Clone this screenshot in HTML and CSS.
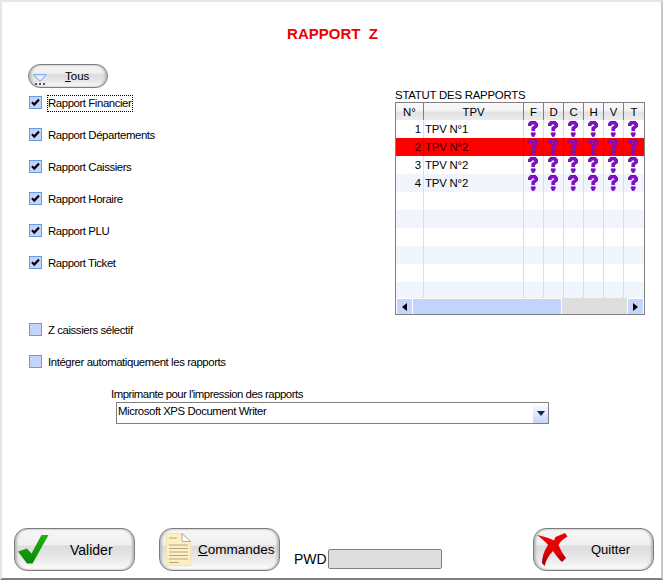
FILE: index.html
```html
<!DOCTYPE html>
<html lang="fr">
<head>
<meta charset="utf-8">
<title>Rapport Z</title>
<link rel="stylesheet" href="styles.css">
</head>
<body>
<svg class="defs" width="0" height="0">
  <symbol id="qm" viewBox="0 0 10 16">
    <path d="M1.8 5V3.2L3.2 1.8H6.8L8.2 3.2V5L5.2 7.4V10" fill="none" stroke="#5c16a8" stroke-width="3.5"/>
    <path d="M1.8 5V3.2L3.2 1.8H6.8L8.2 3.2V5L5.2 7.4V10" fill="none" stroke="#8c0ccc" stroke-width="2.2"/>
    <path d="M3.2 11.8H7.2V13.4L5.9 15.8H4.5L3.2 13.4Z" fill="#860ec8" stroke="#5c16a8" stroke-width=".7"/>
  </symbol>
  <symbol id="chk" viewBox="0 0 13 13">
    <path d="M3 6.2L5.3 8.6L10 3.6" fill="none" stroke="#000" stroke-width="2.2"/>
  </symbol>
  <linearGradient id="gGreen" x1="0" y1="0" x2="0" y2="1">
    <stop offset="0" stop-color="#22b012"/><stop offset="1" stop-color="#0a8806"/>
  </linearGradient>
  <linearGradient id="gRed" x1="0" y1="0" x2="0" y2="1">
    <stop offset="0" stop-color="#f00008"/><stop offset=".6" stop-color="#e00008"/><stop offset="1" stop-color="#8a0004"/>
  </linearGradient>
</svg>
<div class="window">
  <h1 class="title">RAPPORT&nbsp; Z</h1>

  <button class="pill">
    <svg class="pill-icon" width="14" height="11" viewBox="0 0 14 11">
      <path d="M.7.7H13.3L7 7.4Z" fill="#eaf2ff" stroke="#6ea4f4"/>
      <path d="M2 10h2M6 10h2M10 10h2" stroke="#222" stroke-width="1.4"/>
    </svg>
    <span><u>T</u>ous</span>
  </button>

  <div class="main">
    <div class="options">
      <div class="opt"><span class="box"><svg width="13" height="13"><use href="#chk"/></svg></span><span class="lbl focus">Rapport Financier</span></div>
      <div class="opt"><span class="box"><svg width="13" height="13"><use href="#chk"/></svg></span><span class="lbl">Rapport Départements</span></div>
      <div class="opt"><span class="box"><svg width="13" height="13"><use href="#chk"/></svg></span><span class="lbl">Rapport Caissiers</span></div>
      <div class="opt"><span class="box"><svg width="13" height="13"><use href="#chk"/></svg></span><span class="lbl">Rapport Horaire</span></div>
      <div class="opt"><span class="box"><svg width="13" height="13"><use href="#chk"/></svg></span><span class="lbl">Rapport PLU</span></div>
      <div class="opt"><span class="box"><svg width="13" height="13"><use href="#chk"/></svg></span><span class="lbl">Rapport Ticket</span></div>
      <div class="opt sep"><span class="box"></span><span class="lbl">Z caissiers sélectif</span></div>
      <div class="opt"><span class="box"></span><span class="lbl">Intégrer automatiquement les rapports</span></div>
    </div>

    <div class="status">
      <div class="status-title">STATUT DES RAPPORTS</div>
      <div class="grid">
        <div class="grid-view">
          <table>
            <colgroup><col class="c-n"><col class="c-t"><col class="c-s"><col class="c-s"><col class="c-s"><col class="c-s"><col class="c-s"><col class="c-s"></colgroup>
            <thead><tr><th>N°</th><th>TPV</th><th>F</th><th>D</th><th>C</th><th>H</th><th>V</th><th>T</th></tr></thead>
            <tbody>
              <tr><td class="num">1</td><td>TPV N°1</td><td><svg class="q"><use href="#qm"/></svg></td><td><svg class="q"><use href="#qm"/></svg></td><td><svg class="q"><use href="#qm"/></svg></td><td><svg class="q"><use href="#qm"/></svg></td><td><svg class="q"><use href="#qm"/></svg></td><td><svg class="q"><use href="#qm"/></svg></td></tr>
              <tr class="sel"><td class="num">2</td><td>TPV N°2</td><td><svg class="q"><use href="#qm"/></svg></td><td><svg class="q"><use href="#qm"/></svg></td><td><svg class="q"><use href="#qm"/></svg></td><td><svg class="q"><use href="#qm"/></svg></td><td><svg class="q"><use href="#qm"/></svg></td><td><svg class="q"><use href="#qm"/></svg></td></tr>
              <tr><td class="num">3</td><td>TPV N°2</td><td><svg class="q"><use href="#qm"/></svg></td><td><svg class="q"><use href="#qm"/></svg></td><td><svg class="q"><use href="#qm"/></svg></td><td><svg class="q"><use href="#qm"/></svg></td><td><svg class="q"><use href="#qm"/></svg></td><td><svg class="q"><use href="#qm"/></svg></td></tr>
              <tr class="alt"><td class="num">4</td><td>TPV N°2</td><td><svg class="q"><use href="#qm"/></svg></td><td><svg class="q"><use href="#qm"/></svg></td><td><svg class="q"><use href="#qm"/></svg></td><td><svg class="q"><use href="#qm"/></svg></td><td><svg class="q"><use href="#qm"/></svg></td><td><svg class="q"><use href="#qm"/></svg></td></tr>
              <tr><td></td><td></td><td></td><td></td><td></td><td></td><td></td><td></td></tr>
              <tr class="alt"><td></td><td></td><td></td><td></td><td></td><td></td><td></td><td></td></tr>
              <tr><td></td><td></td><td></td><td></td><td></td><td></td><td></td><td></td></tr>
              <tr class="alt"><td></td><td></td><td></td><td></td><td></td><td></td><td></td><td></td></tr>
              <tr><td></td><td></td><td></td><td></td><td></td><td></td><td></td><td></td></tr>
              <tr class="alt"><td></td><td></td><td></td><td></td><td></td><td></td><td></td><td></td></tr>
            </tbody>
          </table>
        </div>
        <div class="hscroll">
          <span class="sb-btn"><svg width="5" height="8" viewBox="0 0 5 8"><path d="M5 0V8L0 4Z"/></svg></span>
          <span class="sb-thumb"></span>
          <span class="sb-track"></span>
          <span class="sb-btn"><svg width="5" height="8" viewBox="0 0 5 8"><path d="M0 0V8L5 4Z"/></svg></span>
        </div>
      </div>
    </div>
  </div>

  <div class="printer">
    <div class="printer-label">Imprimante pour l'impression des rapports</div>
    <div class="combo">
      <span class="combo-text">Microsoft XPS Document Writer</span>
      <span class="combo-btn"><svg width="8" height="5" viewBox="0 0 8 5"><path d="M0 0H8L4 5Z" fill="#14284a"/></svg></span>
    </div>
  </div>

  <div class="footer">
    <button class="btn">
      <svg class="ic-valid" width="31" height="29" viewBox="0 0 31 29"><path d="M0 16.5L9 13.5L13.5 18.5L23.5 0H30.5L14.5 28.5H9Z" fill="url(#gGreen)"/></svg>
      <span class="btn-text t-valid">Valider</span>
    </button>
    <button class="btn">
      <svg class="ic-doc" width="25" height="33" viewBox="0 0 25 33">
        <path d="M.5.5H16L24.5 8.5V32.5H.5Z" fill="#fdeec4" stroke="#f6e2b0"/>
        <path d="M16 .5V8.5H24.5Z" fill="#fff" stroke="#8a8a80" stroke-width=".7"/>
        <path d="M3 5H11M3 12H22M3 15.5H22M3 19H22M3 22.5H22M3 26H22M3 29.5H13" stroke="#b4a680" stroke-width="1"/>
      </svg>
      <span class="btn-text t-cmd"><u>C</u>ommandes</span>
    </button>
    <label class="pwd">PWD<span class="pwd-input"></span></label>
    <button class="btn quit">
      <svg class="ic-quit" width="31" height="33" viewBox="0 0 31 33">
        <path d="M0 2C6 3 12 5 17 7.5L18.5 4L28 0L30.5 3.5C26 6 23 9 21.5 12C23.5 17 26 21 29 25L25 29C21 25 18.5 22 16 18C12 22 9 27 7.5 33L5 30C5 24 7 18 11 12C8 8 4 5 0 2Z" fill="url(#gRed)"/>
      </svg>
      <span class="btn-text t-quit">Quitter</span>
    </button>
  </div>
</div>
</body>
</html>
```
FILE: styles.css
```css
* { box-sizing: border-box; }
html, body { margin: 0; padding: 0; background: #fff; }
body { font-family: "Liberation Sans", Arial, sans-serif; font-size: 11.4px; letter-spacing: -.42px; color: #000; }
.defs { position: absolute; }

.window {
  width: 663px;
  height: 580px;
  display: flex;
  flex-direction: column;
  background: #fff;
  border-top: 2px solid #e6e6e6;
  border-left: 2px solid #e6e6e6;
  border-right: 2px solid #c8c8c8;
  border-bottom: 2px solid #808080;
  overflow: hidden;
}

.title {
  margin: 22px 0 0;
  padding-left: 2px;
  height: 20px;
  line-height: 20px;
  font-size: 15px;
  letter-spacing: 0;
  font-weight: bold;
  color: #f00000;
  text-align: center;
}

button { font-family: inherit; color: #000; padding: 0; cursor: default; }

.pill {
  margin: 20px 0 0 26px;
  width: 80px;
  height: 24px;
  display: flex;
  align-items: center;
  border: 1px solid #7c7c7c;
  border-radius: 12px;
  font-size: 11.5px;
  letter-spacing: 0;
  background: linear-gradient(#f6f6f6 0, #f0f0f0 35%, #dcdcdc 45%, #e6e6e6 70%, #fbfbfb 100%);
  box-shadow: inset 2px 0 2px #bbb, inset -2px 0 2px #bbb;
}
.pill-icon { margin: 6px 0 0 4px; flex: none; }
.pill span { margin-left: 18px; }

.main { display: flex; }
.options { width: 366px; margin-left: 27px; padding-top: 5px; flex: none; }
.opt { height: 20px; margin-bottom: 12px; display: flex; align-items: flex-start; }
.opt:last-child { margin-bottom: 0; }
.opt.sep { margin-top: 47px; }
.box {
  width: 13px;
  height: 13px;
  flex: none;
  margin-top: 3px;
  border: 1px solid #6a9ae6;
  background: #c4d4fa;
}
.box svg { display: block; margin: -1px; }
.lbl { margin: 3px 0 0 6px; line-height: 14px; white-space: nowrap; }
.focus { outline: 1px dotted #000; padding: 0 1px 1px 0; }

.status { width: 250px; flex: none; }
.status-title { height: 14px; line-height: 15px; white-space: nowrap; letter-spacing: -.22px; }
.grid { border: 1px solid #808080; height: 213px; }
.grid-view { height: 195px; overflow: hidden; }
table { border-collapse: separate; border-spacing: 0; table-layout: fixed; width: 248px; }
.c-n { width: 28px; }
.c-t { width: 100px; }
.c-s { width: 20px; }
th {
  height: 17px;
  padding: 0;
  font-weight: normal;
  letter-spacing: 0;
  text-align: center;
  border-right: 1px solid #808080;
  background: linear-gradient(#fafafa 0, #f2f2f2 45%, #e2e2e2 55%, #ececec 100%);
}
td {
  height: 18px;
  padding: 0 0 0 1px;
  border-right: 1px solid #dedede;
  line-height: 18px;
  letter-spacing: -.2px;
  white-space: nowrap;
  overflow: hidden;
}
th:last-child, td:last-child { border-right: 0; }
td.num { text-align: right; padding-right: 2px; }
.alt td { background: #f0f5fd; }
.sel td { background: #ff0000; color: #2a0000; border-right-color: #e80000; }
.q { display: block; width: 10px; height: 16px; margin: 0 0 0 3px; }

.hscroll { height: 16px; display: flex; background: #fff; }
.sb-btn {
  width: 15px;
  height: 15px;
  margin: 1px 1px 0;
  background: #c4d4fa;
  display: flex;
  align-items: center;
  justify-content: center;
  flex: none;
}
.sb-thumb { width: 148px; height: 15px; margin: 1px 1px 0 0; background: #c2d3fd; flex: none; }
.sb-track { flex: 1; background: #dedede; }

.printer { margin: 15px 0 0 109px; }
.printer-label { height: 14px; line-height: 14px; letter-spacing: -.5px; }
.combo {
  margin: 1px 0 0 5px;
  width: 433px;
  height: 22px;
  display: flex;
  justify-content: space-between;
  border: 1px solid #808080;
  background: #fff;
}
.combo-text { padding-left: 1px; line-height: 16px; }
.combo-btn {
  width: 15px;
  background: linear-gradient(#fff, #c4d4fa);
  display: flex;
  align-items: center;
  justify-content: center;
}

.footer { margin-top: auto; padding: 0 7px 7px 12px; display: flex; align-items: flex-end; }
.btn {
  width: 121px;
  height: 43px;
  display: flex;
  align-items: center;
  border: 1px solid #7c7c7c;
  border-radius: 13px;
  font-size: 13px;
  letter-spacing: 0;
  background: linear-gradient(#f6f6f6 0, #f0f0f0 38%, #dcdcdc 42%, #e8e8e8 70%, #fcfcfc 100%);
  box-shadow: inset 2px 0 2px #bbb, inset -2px 0 2px #bbb;
  flex: none;
}
.btn + .btn { margin-left: 24px; }
.btn svg { flex: none; }
.ic-valid { margin-left: 3px; }
.ic-doc { margin-left: 6px; }
.ic-quit { margin-left: 3px; }
.t-valid { margin-left: 21px; font-size: 14px; }
.t-cmd { margin-left: 7px; font-size: 13.5px; }
.t-quit { margin-left: 23px; }
.pwd { display: flex; align-items: center; margin: 0 0 2px 14px; font-size: 14px; letter-spacing: 0; }
.pwd-input {
  margin-left: 1px;
  width: 114px;
  height: 20px;
  border: 1px solid #808080;
  border-radius: 2px;
  background: #dedede;
}
.quit { margin-left: auto; }
```
